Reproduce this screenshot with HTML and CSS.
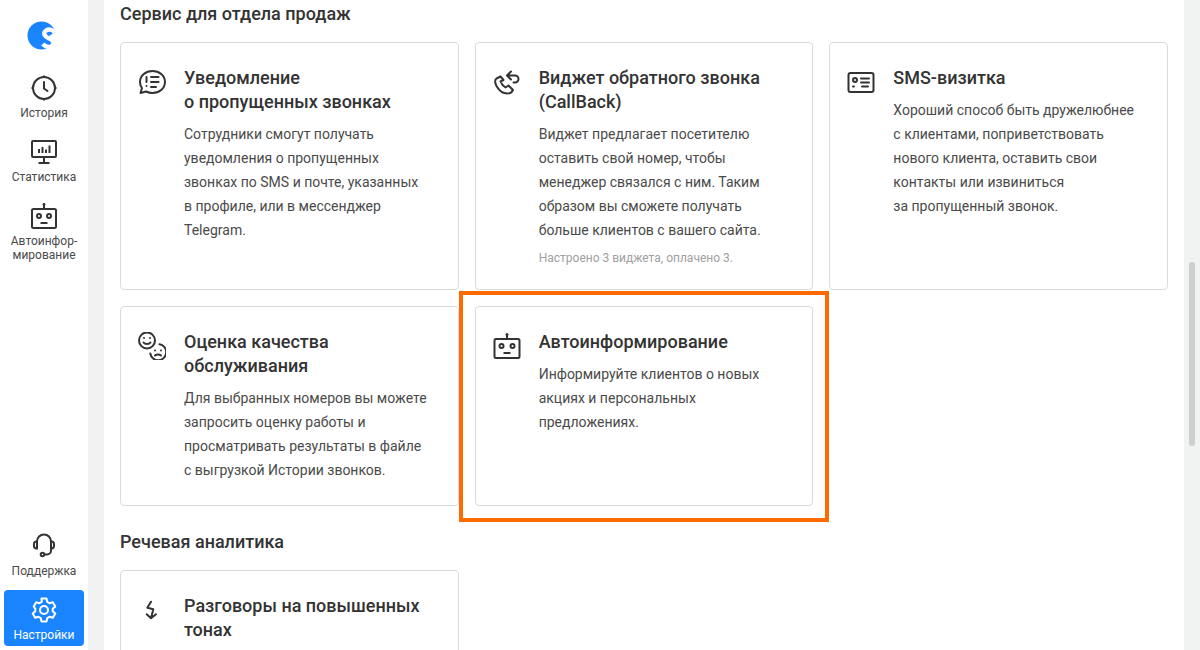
FILE: index.html
```html
<!DOCTYPE html>
<html lang="ru">
<head>
<meta charset="utf-8">
<title>Настройки</title>
<link rel="stylesheet" href="styles.css">
</head>
<body>
<div class="app">
  <nav class="sidebar">
    <div class="logo">
      <svg width="34" height="30" viewBox="0 0 34 30"><circle cx="14.500" cy="14.500" r="14" fill="#1a84ff"/><path d="M29 10.500L31 30H16L24 26.500L29 20L22 15z" fill="#fff"/><path d="M27.700 11.300C25.500 8.500 21 7.500 18.500 10C16 12.500 17.500 15.500 21.700 17.300C25.500 19 27.500 21 25.800 24C24 27 19 26.500 15.700 23" fill="none" stroke="#fff" stroke-width="4.400"/></svg>
    </div>
    <a class="nav-item nav-first">
      <svg class="nav-icon" width="28" height="28" viewBox="0 0 28 28" fill="none" stroke="#333" stroke-width="2"><circle cx="14" cy="14" r="11"/><path d="M14 8v6.500l3.500 2.500" stroke-linecap="round" stroke-linejoin="round"/><path d="M14 1.500v2M14 24.500v2M1.500 14h2M24.500 14h2"/></svg>
      <span>История</span>
    </a>
    <a class="nav-item">
      <svg class="nav-icon" width="28" height="28" viewBox="0 0 28 28" fill="none" stroke="#333" stroke-width="2"><rect x="2" y="3" width="24" height="16" rx="1"/><path d="M14 19v6M8.500 25h11M9 15v-4M12.500 15V9M16 15v-3.500M19.500 15V7.500"/></svg>
      <span>Статистика</span>
    </a>
    <a class="nav-item">
      <svg class="nav-icon" width="28" height="28" viewBox="0 0 28 28" fill="none" stroke="#333" stroke-width="2"><rect x="2" y="7" width="24" height="19" rx="1.500"/><path d="M14 7V3"/><circle cx="14" cy="2.500" r="1.400" fill="#333" stroke="none"/><circle cx="9" cy="14" r="2"/><circle cx="19" cy="14" r="2"/><path d="M10.500 21h7"/></svg>
      <span>Автоинфор-<br>мирование</span>
    </a>
    <a class="nav-item nav-support">
      <svg class="nav-icon" width="28" height="28" viewBox="0 0 28 28" fill="none" stroke="#333" stroke-width="2"><path d="M7 11V9.500a7 7 0 0 1 14 0V11"/><path d="M7 9.500H6a2.500 2.500 0 0 0-2 2.500v2a2.500 2.500 0 0 0 2 2.500h1zM21 9.500h1a2.500 2.500 0 0 1 2 2.500v2a2.500 2.500 0 0 1-2 2.500h-1z"/><path d="M21 16.500v2a4 4 0 0 1-4 4h-3"/><circle cx="12.500" cy="22.500" r="1.800"/></svg>
      <span>Поддержка</span>
    </a>
    <a class="nav-item nav-active">
      <svg class="nav-icon" width="28" height="28" viewBox="0 0 28 28" fill="none" stroke="#fff" stroke-width="2" stroke-linejoin="round"><circle cx="14" cy="14" r="4"/><path d="M11.500 2.500h5l.7 3.400 2.300 1.300 3.300-1 2.500 4.300-2.600 2.300v2.400l2.600 2.300-2.500 4.300-3.300-1-2.300 1.300-.7 3.400h-5l-.7-3.400-2.300-1.300-3.300 1-2.500-4.300 2.600-2.300v-2.400L3.700 10.500l2.500-4.300 3.300 1 2.300-1.300z"/></svg>
      <span>Настройки</span>
    </a>
  </nav>
  <div class="gutter"></div>
  <main class="content">
    <h2 class="section-title section-first">Сервис для отдела продаж</h2>
    <div class="grid">
      <article class="card card-tall">
        <svg class="card-icon" width="28" height="28" viewBox="0 0 28 28" fill="none" stroke="#333" stroke-width="2" stroke-linecap="round" stroke-linejoin="round"><path d="M14.500 3c6.500 0 12.500 4.500 12.500 11s-6 11-12.500 11c-2.500 0-4.500-.5-6.500-1.500L2.500 25 4 20C2.800 18.500 2 16.500 2 14 2 7.500 8 3 14.500 3z"/><path d="M8.500 9v5M8.500 18v.100M13 9h7.500M13 14h7.500M13 19h5"/></svg>
        <div class="card-body">
          <h3>Уведомление<br>о пропущенных звонках</h3>
          <p>Сотрудники смогут получать<br>уведомления о пропущенных<br>звонках по SMS и почте, указанных<br>в профиле, или в мессенджер<br>Telegram.</p>
        </div>
      </article>
      <article class="card card-tall">
        <svg class="card-icon" width="28" height="28" viewBox="0 0 28 28" fill="none" stroke="#333" stroke-width="2" stroke-linecap="round" stroke-linejoin="round"><path d="M7.500 8.500L3.500 10.500C1.500 12 2 15 3.500 18 6 22.500 10 25.500 14.500 25.500 17 25.500 19 24 20 22L15.500 17.500 12.500 19.500C10 18 8.500 16 7.500 13.500L10.500 12z"/><path d="M18 3.500l-4 4 4 4M14.500 7.500H22a3.500 3.500 0 0 1 0 7h-1.500"/></svg>
        <div class="card-body">
          <h3>Виджет обратного звонка<br>(CallBack)</h3>
          <p>Виджет предлагает посетителю<br>оставить свой номер, чтобы<br>менеджер связался с ним. Таким<br>образом вы сможете получать<br>больше клиентов с вашего сайта.</p>
          <p class="note">Настроено 3 виджета, оплачено 3.</p>
        </div>
      </article>
      <article class="card card-tall">
        <svg class="card-icon" width="28" height="28" viewBox="0 0 28 28" fill="none" stroke="#333" stroke-width="2" stroke-linecap="round"><rect x="1.500" y="5" width="25" height="19" rx="2"/><circle cx="8" cy="12" r="2"/><path d="M14 10.500h8M14 14.500h8M6 18.500h1M15 18.500h6"/></svg>
        <div class="card-body">
          <h3>SMS-визитка</h3>
          <p>Хороший способ быть дружелюбнее<br>с клиентами, поприветствовать<br>нового клиента, оставить свои<br>контакты или извиниться<br>за пропущенный звонок.</p>
        </div>
      </article>
      <article class="card card-mid">
        <svg class="card-icon" width="28" height="28" viewBox="0 0 28 28" fill="none" stroke="#333" stroke-width="2" stroke-linecap="round"><circle cx="9" cy="8.500" r="8"/><path d="M5.500 10.500c1.500 2 5.500 2 7 0M6 6v.100M12 6v.100"/><path d="M21.500 12.300A8 8 0 1 1 12.300 21.500"/><path d="M17 23.500c1.500-1.500 4.500-1.500 6 0M17 18.500v.100M23 18.500v.100"/></svg>
        <div class="card-body">
          <h3>Оценка качества<br>обслуживания</h3>
          <p>Для выбранных номеров вы можете<br>запросить оценку работы и<br>просматривать результаты в файле<br>с выгрузкой Истории звонков.</p>
        </div>
      </article>
      <article class="card card-mid card-marked">
        <svg class="card-icon" width="28" height="28" viewBox="0 0 28 28" fill="none" stroke="#333" stroke-width="2"><rect x="1.500" y="7" width="25" height="19" rx="1.500"/><path d="M14 7V3"/><circle cx="14" cy="2.500" r="1.500" fill="#333" stroke="none"/><circle cx="8.500" cy="14" r="2"/><circle cx="19.500" cy="14" r="2"/><path d="M10.500 21h7"/></svg>
        <div class="card-body">
          <h3>Автоинформирование</h3>
          <p>Информируйте клиентов о новых<br>акциях и персональных<br>предложениях.</p>
        </div>
        <div class="marker"></div>
      </article>
    </div>
    <h2 class="section-title section-next">Речевая аналитика</h2>
    <div class="grid">
      <article class="card card-tall">
        <svg class="card-icon" width="28" height="28" viewBox="0 0 28 28" fill="none" stroke="#333" stroke-width="2" stroke-linecap="round" stroke-linejoin="round"><path d="M13 5.700L9.300 11.700 15.300 13.300 13 22.300M8.700 18.300L13 22.300 18 18.300"/></svg>
        <div class="card-body">
          <h3>Разговоры на повышенных<br>тонах</h3>
        </div>
      </article>
    </div>
  </main>
  <div class="scrollbar"><div class="thumb"></div></div>
</div>
</body>
</html>
```
FILE: styles.css
```css
* { box-sizing: border-box; }
html, body { margin: 0; height: 100%; overflow: hidden; }
body { font-family: Roboto, "Liberation Sans", sans-serif; color: #333; background: #f1f2f2; }
.app { display: flex; width: 1200px; height: 650px; overflow: hidden; }
.sidebar { width: 88px; height: 650px; flex: none; background: #fff; display: flex; flex-direction: column; align-items: center; padding: 0 4px 4px; }
.logo { height: 30px; margin-top: 21px; }
.logo svg { display: block; }
.nav-item { width: 80px; display: flex; flex-direction: column; align-items: center; font-size: 12px; line-height: 14px; color: #4a4a4a; text-align: center; }
.nav-icon { display: block; margin-bottom: 4px; }
.nav-first { margin-top: 23px; }
.nav-item + .nav-item { margin-top: 18px; }
.nav-item.nav-support { margin-top: auto; }
.nav-item.nav-active { background: #1a84ff; color: #fff; border-radius: 4px; height: 56px; padding-top: 6px; margin-top: 12px; }
.gutter { width: 16px; flex: none; background: #f1f2f2; }
.content { width: 1080px; flex: none; height: 650px; background: #fff; padding: 2px 16px 0; overflow: hidden; }
.section-title { margin: 0; font-size: 18px; line-height: 24px; font-weight: 500; color: #333; }
.section-first { margin-bottom: 16px; }
.section-next { margin-top: 24px; margin-bottom: 16px; }
.grid { display: grid; grid-template-columns: repeat(3, 1fr); gap: 16px; }
.card { position: relative; display: flex; gap: 18px; padding: 23px 16px 0 17px; background: #fff; border: 1px solid #d9dbdb; border-radius: 4px; }
.card-tall { min-height: 248px; }
.card-mid { height: 200px; }
.card-icon { flex: none; margin-top: 2px; }
.card-body { min-width: 0; }
.card-body h3 { margin: 0 0 8px; font-size: 18px; line-height: 24px; font-weight: 500; color: #333; white-space: nowrap; }
.card-body p { margin: 0; font-size: 14px; line-height: 24px; color: #4a4a4a; white-space: nowrap; }
.card-body p.note { font-size: 12px; color: #a0a0a0; margin-top: 4px; line-height: 24px; }
.marker { position: absolute; left: -17px; top: -16px; width: 370px; height: 231px; border: 4px solid #ff6a00; }
.scrollbar { width: 16px; flex: none; background: #f1f2f2; position: relative; }
.thumb { position: absolute; left: 5px; top: 262px; width: 6px; height: 184px; border-radius: 3px; background: #cdcfcf; }
```
